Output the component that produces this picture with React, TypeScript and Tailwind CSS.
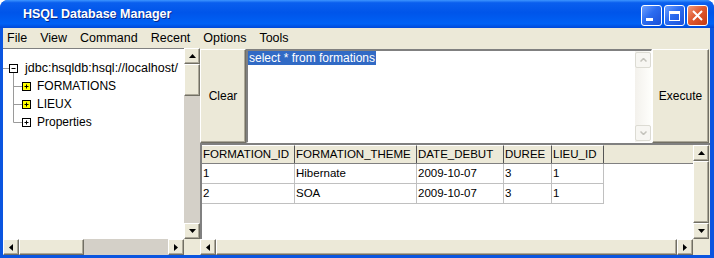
import React from 'react';

type Dir = 'up' | 'down' | 'left' | 'right';

const BEVEL =
    'bg-[#ece9d8] border border-t-white border-l-white border-r-[#716f64] border-b-[#716f64] shadow-[inset_-1px_-1px_0_#aca899]';

const Arrow = ({ dir }: { dir: Dir }) => {
    const vertical = dir === 'up' || dir === 'down';
    const pts = {
        up: '3.5,0 7,4 0,4',
        down: '0,0 7,0 3.5,4',
        left: '4,0 4,7 0,3.5',
        right: '0,0 4,3.5 0,7',
    }[dir];
    return (
        <svg width={vertical ? 7 : 4} height={vertical ? 4 : 7} viewBox={vertical ? '0 0 7 4' : '0 0 4 7'}>
            <polygon points={pts} fill="#000" />
        </svg>
    );
};

const ScrollButton = ({ dir }: { dir: Dir }) => (
    <div className={`${BEVEL} w-[16px] h-[16px] shrink-0 flex items-center justify-center`}>
        <Arrow dir={dir} />
    </div>
);

// tree row icons: lines + expander box
const RootGutter = () => (
    <svg width="22" height="18" className="shrink-0">
        <line x1="0" y1="9.5" x2="6" y2="9.5" stroke="#9a9a9a" />
        <line x1="10.5" y1="14" x2="10.5" y2="18" stroke="#9a9a9a" />
        <rect x="6.5" y="5.5" width="8" height="8" fill="#fff" stroke="#000" />
        <line x1="8.5" y1="9.5" x2="12.5" y2="9.5" stroke="#000" />
    </svg>
);

const ChildGutter = ({ last, yellow }: { last?: boolean; yellow?: boolean }) => (
    <svg width="34" height="18" className="shrink-0">
        <line x1="10.5" y1="0" x2="10.5" y2={last ? 9.5 : 18} stroke="#9a9a9a" />
        <line x1="10.5" y1="9.5" x2="19" y2="9.5" stroke="#9a9a9a" />
        <rect x="19.5" y="5.5" width="8" height="8" fill={yellow ? '#ffff00' : '#fff'} stroke="#000" />
        <line x1="21.5" y1="9.5" x2="25.5" y2="9.5" stroke="#000" />
        <line x1="23.5" y1="7.5" x2="23.5" y2="11.5" stroke="#000" />
    </svg>
);

const columns = [
    { name: 'FORMATION_ID', w: 'w-[93px]' },
    { name: 'FORMATION_THEME', w: 'w-[122px]' },
    { name: 'DATE_DEBUT', w: 'w-[87px]' },
    { name: 'DUREE', w: 'w-[48px]' },
    { name: 'LIEU_ID', w: 'w-[52px]' },
];

const rows = [
    ['1', 'Hibernate', '2009-10-07', '3', '1'],
    ['2', 'SOA', '2009-10-07', '3', '1'],
];

const menus = ['File', 'View', 'Command', 'Recent', 'Options', 'Tools'];

const App: React.FC = () => {
    return (
        <div className="w-[714px] h-[258px] flex flex-col bg-[#0a55e0] rounded-t-[8px] overflow-hidden font-['Liberation_Sans',Arial,sans-serif] text-[12px] text-black">
            {/* Title bar */}
            <div className="h-[28px] shrink-0 flex items-center bg-[linear-gradient(to_bottom,#3d95ff_0%,#0a5fee_10%,#0055ea_45%,#0061f5_85%,#0048d8_100%)]">
                <span className="pl-[23px] flex-1 text-white font-bold text-[12.5px] [text-shadow:1px_1px_0_#0b2a8a]">
                    HSQL Database Manager
                </span>
                <div className="flex gap-[2px] pr-[6px] pt-[3px]">
                    <div className="w-[21px] h-[21px] rounded-[3px] border border-white bg-[linear-gradient(135deg,#6ea0ff_0%,#2b6cf0_45%,#1b50d8_100%)] flex items-end pl-[4px] pb-[4px]">
                        <div className="w-[7px] h-[3px] bg-white" />
                    </div>
                    <div className="w-[21px] h-[21px] rounded-[3px] border border-white bg-[linear-gradient(135deg,#6ea0ff_0%,#2b6cf0_45%,#1b50d8_100%)] flex items-center justify-center">
                        <div className="w-[11px] h-[10px] border border-white border-t-[3px]" />
                    </div>
                    <div className="w-[21px] h-[21px] rounded-[3px] border border-white bg-[linear-gradient(135deg,#f09a7a_0%,#e05a30_45%,#c23a14_100%)] flex items-center justify-center">
                        <svg width="11" height="11" viewBox="0 0 11 11">
                            <path d="M1 1 L10 10 M10 1 L1 10" stroke="#fff" strokeWidth="2" />
                        </svg>
                    </div>
                </div>
            </div>

            <div className="flex-1 flex flex-col pl-[3px] pr-[4px] pb-[3px] min-h-0">
                {/* Menu bar */}
                <div className="h-[20px] shrink-0 bg-[#ece9d8] flex items-center gap-[13px] pl-[4px] text-[12.5px]">
                    {menus.map((m) => (
                        <span key={m}>{m}</span>
                    ))}
                </div>

                {/* Content */}
                <div className="flex-1 flex bg-[#ece9d8] min-h-0">
                    {/* Left: tree */}
                    <div className="w-[197px] shrink-0 flex flex-col">
                        <div className="flex-1 flex min-h-0">
                            <div className="flex-1 bg-white border-t border-t-[#808080] pt-[10px] flex flex-col">
                                <div className="h-[18px] flex items-center text-[12.5px]">
                                    <RootGutter />
                                    <span>jdbc:hsqldb:hsql://localhost/</span>
                                </div>
                                <div className="h-[18px] flex items-center">
                                    <ChildGutter yellow />
                                    <span>FORMATIONS</span>
                                </div>
                                <div className="h-[18px] flex items-center">
                                    <ChildGutter yellow />
                                    <span>LIEUX</span>
                                </div>
                                <div className="h-[18px] flex items-center">
                                    <ChildGutter last />
                                    <span>Properties</span>
                                </div>
                            </div>
                            <div className="w-[16px] shrink-0 flex flex-col bg-[#d4d0c8]">
                                <ScrollButton dir="up" />
                                <div className={`${BEVEL} h-[32px] shrink-0`} />
                                <div className="flex-1" />
                                <ScrollButton dir="down" />
                            </div>
                        </div>
                        <div className="h-[16px] shrink-0 flex">
                            <ScrollButton dir="left" />
                            <div className={`${BEVEL} w-[65px] shrink-0`} />
                            <div className="flex-1 bg-[#d4d0c8]" />
                            <ScrollButton dir="right" />
                            <div className="w-[16px] shrink-0 bg-[#ece9d8]" />
                        </div>
                    </div>

                    {/* Right: query + results */}
                    <div className="flex-1 flex flex-col min-w-0">
                        <div className="h-[95px] shrink-0 flex pt-[1px] pr-[1px]">
                            <div className={`${BEVEL} w-[46px] shrink-0 flex items-center justify-center`}>
                                Clear
                            </div>
                            <div className="flex-1 flex bg-white border-t-2 border-l-2 border-t-[#808080] border-l-[#808080] border-b border-r border-b-white border-r-white">
                                <div className="flex-1 leading-[15px]">
                                    <span className="bg-[#316ac5] text-white px-[1px]">select * from formations</span>
                                </div>
                                <div className="w-[16px] shrink-0 flex flex-col py-[1px] bg-[linear-gradient(to_right,#f3f1ec,#fefefb)]">
                                    <div className="h-[16px] rounded-[2px] border border-[#dcdbd3] bg-[#f7f6f2] flex items-center justify-center">
                                        <svg width="7" height="4" viewBox="0 0 7 4">
                                            <path d="M0.5 3.5 L3.5 0.5 L6.5 3.5" stroke="#c4c3bc" strokeWidth="1.5" fill="none" />
                                        </svg>
                                    </div>
                                    <div className="flex-1" />
                                    <div className="h-[16px] rounded-[2px] border border-[#dcdbd3] bg-[#f7f6f2] flex items-center justify-center">
                                        <svg width="7" height="4" viewBox="0 0 7 4">
                                            <path d="M0.5 0.5 L3.5 3.5 L6.5 0.5" stroke="#c4c3bc" strokeWidth="1.5" fill="none" />
                                        </svg>
                                    </div>
                                </div>
                            </div>
                            <div className={`${BEVEL} w-[57px] shrink-0 flex items-center justify-center`}>
                                Execute
                            </div>
                        </div>

                        <div className="flex-1 flex flex-col min-h-0">
                            <div className="flex-1 flex border-t-2 border-l-2 border-t-[#808080] border-l-[#808080] min-h-0">
                                <div className="flex-1 flex flex-col bg-white min-w-0 text-[11.5px]">
                                    <div className="h-[19px] shrink-0 flex bg-[#ece9d8] border-b border-b-[#808080]">
                                        {columns.map((c) => (
                                            <div
                                                key={c.name}
                                                className={`${c.w} shrink-0 pl-[1px] flex items-center border-r border-r-[#555555] border-t border-t-white`}
                                            >
                                                {c.name}
                                            </div>
                                        ))}
                                    </div>
                                    {rows.map((r, i) => (
                                        <div key={i} className="h-[20px] shrink-0 flex">
                                            {r.map((v, j) => (
                                                <div
                                                    key={j}
                                                    className={`${columns[j].w} shrink-0 pl-[1px] flex items-center border-r border-b border-[#c0c0c0]`}
                                                >
                                                    {v}
                                                </div>
                                            ))}
                                        </div>
                                    ))}
                                </div>
                                <div className="w-[16px] shrink-0 mr-[1px] flex flex-col">
                                    <ScrollButton dir="up" />
                                    <div className={`${BEVEL} flex-1`} />
                                    <ScrollButton dir="down" />
                                </div>
                            </div>
                            <div className="h-[16px] shrink-0 flex pr-[1px]">
                                <ScrollButton dir="left" />
                                <div className={`${BEVEL} flex-1`} />
                                <ScrollButton dir="right" />
                                <div className="w-[16px] shrink-0" />
                            </div>
                        </div>
                    </div>
                </div>
            </div>
        </div>
    );
};

export default App;
